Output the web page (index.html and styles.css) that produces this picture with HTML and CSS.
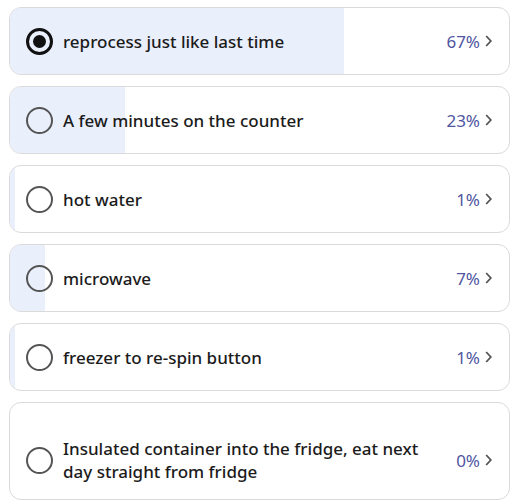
FILE: index.html
```html
<!DOCTYPE html>
<html>
<head>
<meta charset="utf-8">
<link rel="stylesheet" href="styles.css">
</head>
<body>
<div class="poll">
  <div class="option">
    <div class="fill" style="width:67%"></div>
    <span class="radio selected"></span>
    <span class="label">reprocess just like last time</span>
    <span class="pct">67%</span>
    <svg class="chev" viewBox="0 0 9 14" width="9" height="14"><path d="M2.2 2 L6.8 7 L2.2 12" fill="none" stroke="#555" stroke-width="1.8"/></svg>
  </div>
  <div class="option">
    <div class="fill" style="width:23%"></div>
    <span class="radio"></span>
    <span class="label">A few minutes on the counter</span>
    <span class="pct">23%</span>
    <svg class="chev" viewBox="0 0 9 14" width="9" height="14"><path d="M2.2 2 L6.8 7 L2.2 12" fill="none" stroke="#555" stroke-width="1.8"/></svg>
  </div>
  <div class="option">
    <div class="fill" style="width:1%"></div>
    <span class="radio"></span>
    <span class="label">hot water</span>
    <span class="pct">1%</span>
    <svg class="chev" viewBox="0 0 9 14" width="9" height="14"><path d="M2.2 2 L6.8 7 L2.2 12" fill="none" stroke="#555" stroke-width="1.8"/></svg>
  </div>
  <div class="option">
    <div class="fill" style="width:7%"></div>
    <span class="radio"></span>
    <span class="label">microwave</span>
    <span class="pct">7%</span>
    <svg class="chev" viewBox="0 0 9 14" width="9" height="14"><path d="M2.2 2 L6.8 7 L2.2 12" fill="none" stroke="#555" stroke-width="1.8"/></svg>
  </div>
  <div class="option">
    <div class="fill" style="width:1%"></div>
    <span class="radio"></span>
    <span class="label">freezer to re-spin button</span>
    <span class="pct">1%</span>
    <svg class="chev" viewBox="0 0 9 14" width="9" height="14"><path d="M2.2 2 L6.8 7 L2.2 12" fill="none" stroke="#555" stroke-width="1.8"/></svg>
  </div>
  <div class="option tall">
    <span class="radio"></span>
    <span class="label">Insulated container into the fridge, eat next day straight from fridge</span>
    <span class="pct">0%</span>
    <svg class="chev" viewBox="0 0 9 14" width="9" height="14"><path d="M2.2 2 L6.8 7 L2.2 12" fill="none" stroke="#555" stroke-width="1.8"/></svg>
  </div>
</div>
</body>
</html>
```
FILE: styles.css
```css
* { box-sizing: border-box; }
html, body { margin: 0; padding: 0; background: #fff; }
body {
  font-family: "Noto Sans", "Open Sans", sans-serif;
  color: #1b1b1b;
}
.poll {
  display: flex;
  flex-direction: column;
  gap: 11px;
  padding: 7px 7px 0 9px;
}
.option {
  position: relative;
  overflow: hidden;
  display: flex;
  align-items: center;
  min-height: 68px;
  padding: 12px 16px 12px 16px;
  border: 1px solid #dadada;
  border-radius: 12px;
  background: #fff;
}
.option.tall {
  min-height: 97px;
  padding-top: 34px;
  padding-bottom: 16px;
}
.fill {
  position: absolute;
  left: 0;
  top: 0;
  bottom: 0;
  background: #e9effb;
}
.radio {
  position: relative;
  flex: none;
  width: 27px;
  height: 27px;
  border: 2.5px solid #555;
  border-radius: 50%;
  background: transparent;
}
.radio.selected {
  border: 3px solid #111;
}
.radio.selected::after {
  content: "";
  position: absolute;
  left: 4px;
  top: 4px;
  width: 13px;
  height: 13px;
  border-radius: 50%;
  background: #111;
}
.label {
  position: relative;
  flex: 1;
  margin-left: 10px;
  font-size: 17px;
  font-weight: 500;
  line-height: 23px;
  padding-right: 24px;
}
.pct {
  position: relative;
  font-size: 17px;
  font-weight: 400;
  color: #4f55a0;
}
.chev {
  position: relative;
  margin-left: 4px;
  flex: none;
}
```
